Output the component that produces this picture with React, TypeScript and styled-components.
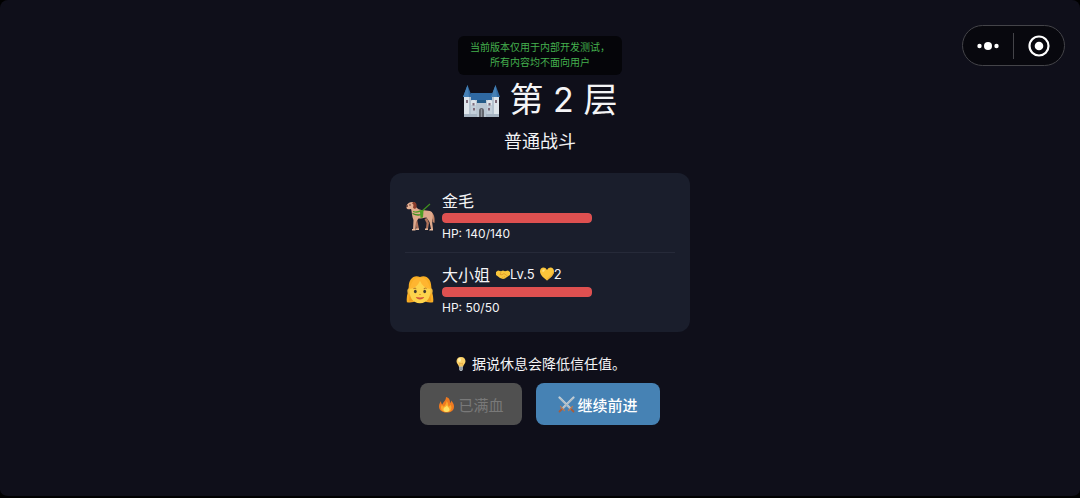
import React from "react";
import styled, { createGlobalStyle } from "styled-components";

const GlobalStyle = createGlobalStyle`
  * { box-sizing: border-box; }
  body {
    margin: 0;
    background: #000;
    color: #f4f4f6;
    font-family: Inter, "Noto Sans CJK SC", sans-serif;
  }
  h1, h2, p { margin: 0; font-weight: 400; }
`;

const Screen = styled.main`
  position: relative;
  min-height: 100vh;
  padding: 36px 16px;
  display: flex;
  flex-direction: column;
  align-items: center;
  background: #0f0f1a;
  border-bottom: 2px solid #000;
  border-radius: 8px;
`;

const Notice = styled.p`
  padding: 4px 12px 5px;
  border-radius: 6px;
  background: #050509;
  color: #44b04e;
  font-size: 10px;
  line-height: 15px;
  text-align: center;
`;

const Title = styled.h1`
  display: flex;
  align-items: center;
  gap: 10px;
  font-size: 34px;
  line-height: 50px;
`;

const Subtitle = styled.h2`
  margin-top: 4px;
  font-size: 18px;
  line-height: 26px;
`;

const Card = styled.section`
  width: 100%;
  max-width: 300px;
  margin-top: 18px;
  padding: 6px 15px;
  border-radius: 12px;
  background: #1a1e2c;
`;

const Member = styled.article`
  display: flex;
  align-items: center;
  gap: 7px;
  padding: 9px 0 8px;
  & + & { border-top: 1px solid #262a39; }
`;

const Stats = styled.div`
  flex: 1;
`;

const NameRow = styled.div`
  display: flex;
  align-items: center;
  gap: 5px;
  height: 24px;
  font-size: 16px;
`;

const Badge = styled.span`
  display: flex;
  align-items: center;
  font-size: 13px;
`;

const Track = styled.div`
  width: 150px;
  height: 10px;
  margin-top: 1px;
  border-radius: 4px;
  background: #3a3d4a;
  overflow: hidden;
`;

const Fill = styled.div`
  height: 100%;
  border-radius: 4px;
  background: #de5050;
`;

const Hp = styled.div`
  font-size: 12px;
  line-height: 21px;
`;

const Hint = styled.p`
  display: flex;
  align-items: center;
  gap: 4px;
  margin-top: 21px;
  font-size: 14px;
  line-height: 22px;
`;

const Actions = styled.div`
  display: flex;
  gap: 14px;
  margin-top: 8px;
`;

const ActionButton = styled.button<{ $primary?: boolean }>`
  display: flex;
  align-items: center;
  gap: 3px;
  height: 42px;
  padding: 0 ${(p) => (p.$primary ? 22 : 18)}px;
  border: 0;
  border-radius: 8px;
  background: ${(p) => (p.$primary ? "#4682b4" : "#505050")};
  color: ${(p) => (p.$primary ? "#fff" : "#797979")};
  font-family: inherit;
  font-size: 15px;
  font-weight: ${(p) => (p.$primary ? 500 : 400)};
`;

const Capsule = styled.div`
  position: absolute;
  top: 25px;
  right: 15px;
  display: flex;
  align-items: center;
  width: 103px;
  height: 41px;
  border: 1px solid #444449;
  border-radius: 21px;
  background: #08080e;
`;

const CapsuleButton = styled.button`
  flex: 1;
  display: flex;
  align-items: center;
  justify-content: center;
  height: 26px;
  padding: 0;
  border: 0;
  background: none;
  & + & { border-left: 1px solid #444449; }
`;

const Icon = styled.svg`
  display: block;
  flex: none;
`;

const Castle = () => (
  <Icon width="37" height="37" viewBox="0 -1 37 37" aria-hidden="true">
    <path d="M8 10h21l2 9H6z" fill="#2f69a3" />
    <path d="M7 17h23v17H7z" fill="#c3cfda" />
    <path d="M7 18h2v-1h3v1h2v-1h9v1h2v-1h3v1h2v4H7z" fill="#dce4eb" />
    <path d="M13 18h11v16H13z" fill="#b9c6d2" />
    <path d="M1 14h7v20H1zM29 14h7v20h-7z" fill="#dfe6ec" />
    <path d="M6 14h2v20H6zM29 14h2v20h-2z" fill="#b5c3d0" />
    <path d="M4.500 2L9 14H0zM32.500 2L37 14h-9z" fill="#326ca5" />
    <path d="M4.500 2L6 14H0zM32.500 2L34 14h-6z" fill="#4680b5" />
    <path d="M14 17h9v3h-9z" fill="#245b88" />
    <path d="M16 34v-6a2.500 3 0 0 1 5 0v6z" fill="#62656d" />
    <path d="M18.500 26v8" stroke="#8f949d" />
    <path d="M3 17h2v3H3zM32 17h2v3h-2zM9.500 20h2v2.500h-2zM25.500 20h2v2.500h-2zM10 25h2v2.500h-2zM25 25h2v2.500h-2z" fill="#806d7c" />
    <path d="M1 31h13v3H1zM23 31h13v3H23z" fill="#a6b4c2" />
  </Icon>
);

const Dog = () => (
  <Icon width="30" height="30" viewBox="0 0 30 30" aria-hidden="true">
    <path d="M26 11c3 2 4 5 3.500 11l-2-1c0-4-1-6-3-8z" fill="#c08468" />
    <path d="M12 18l2 10h-2.500L10 19zM22 17l2 5-1 6h-2l.5-6-2-4z" fill="#b0735b" />
    <path d="M6 7l5-1c3 4 9 3 14 4 3 1 3 4 2.500 7l-.5 3 1 8h-2l-1.500-7-3-4.500c-3 .5-5 1-8 1L11 21l-.5 8H8l.5-10C7 16 7 12 6 7z" fill="#dfa98c" />
    <path d="M1.500 4.500C3 1.500 6 .5 8.500 1c2 .5 3 3 2.500 5.500C10.500 9 8 9.500 6 8 4 8.500 2 8.500 1.500 7z" fill="#e5b092" />
    <path d="M8 1c3 0 4 2 3.500 5-.5 2-2.500 2.500-3.500.5C8.500 5 9 3 7 2.500z" fill="#8a3c2a" />
    <circle cx="5" cy="4" r=".7" fill="#382523" />
    <path d="M1 4.500l1.500-.5.5 1.500-1.500.7z" fill="#4a2929" />
    <path d="M7.500 12.500c4 2 8 1.500 10 .5M16 11l9-8" fill="none" stroke="#3f8e1f" strokeWidth="1.300" />
    <path d="M8 10c3 1 5 0 8-1l2.500.5-.5 7-2.500.5-.5-6c-3 1-4.500 1-7 0z" fill="#4f9f25" />
    <path d="M7 28h3.500v1.500H7zM11 27.500h3V29h-3zM20 27.500h3V29h-3zM25 28h3v1.500h-4z" fill="#e8bb9e" />
  </Icon>
);

const Girl = () => (
  <Icon width="30" height="30" viewBox="-1 0 32 32" aria-hidden="true">
    <path d="M15 2C8-1 3 5 3 12c0 6-3 10-2 17 4 1 8 0 10-2h8c2 2 6 3 10 2 1-7-2-11-2-17C27 5 22-1 15 2z" fill="#f9ae24" />
    <path d="M4 21l-1 7h6zM26 21l1 7h-6z" fill="#ee9b1e" />
    <ellipse cx="4" cy="17" rx="2.500" ry="3" fill="#f1b83c" />
    <ellipse cx="26" cy="17" rx="2.500" ry="3" fill="#f1b83c" />
    <path d="M4 14c3-1 8-4 11-9 3 5 8 8 11 9 1 9-3 16-11 16S3 23 4 14z" fill="#fdd34c" />
    <path d="M15 3C11 2 6 5 4 15c5-1 9-4 11-9 2 5 6 8 11 9C24 5 19 2 15 3z" fill="#ffb530" />
    <ellipse cx="10" cy="17.500" rx="1.500" ry="1.900" fill="#453b31" />
    <ellipse cx="20" cy="17.500" rx="1.500" ry="1.900" fill="#453b31" />
    <path d="M8 14.500q2-1 3 0M19 14.500q2-1 3 0" fill="none" stroke="#a96a24" />
    <path d="M14 20.800h2" stroke="#dba330" strokeWidth="1.300" />
    <path d="M10.500 23.500q4.500 1 9 0c-1 3.500-8 3.500-9 0z" fill="#d25438" />
  </Icon>
);

const Handshake = () => (
  <Icon width="15" height="14" viewBox="-1 0 15 14" aria-hidden="true">
    <path d="M0 5l2-1.500 3 .8 2-.8 2 .8 3-.8L14 5v3l-3 2-2 1.500-2 .5-3-1-2-1.500L0 8z" fill="#f9c63b" />
    <path d="M5 5L4 7.500l2 .3L8 6.500l3.500 2.500M6 11l1.500-1M9.500 10.500L8 9.300" fill="none" stroke="#e0982a" strokeWidth=".8" />
  </Icon>
);

const Heart = () => (
  <Icon width="14" height="14" viewBox="0 0 14 14" aria-hidden="true">
    <path d="M7 13.500C4 11 0 8 0 4.500 0 0 5-1 7 3c2-4 7-3 7 1.500 0 3.500-4 6.500-7 9z" fill="#fac53b" />
    <ellipse cx="3.500" cy="3.500" rx="1.500" ry="1" fill="#ffe181" transform="rotate(-40 3.500 3.500)" />
    <path d="M13.300 3c0 4-3.800 7-7.300 9l1 1.500C10 11 14 8 14 4.500z" fill="#efb136" />
  </Icon>
);

const Bulb = () => (
  <Icon width="14" height="14" viewBox="0 0 14 14" aria-hidden="true">
    <path d="M7 0C4 0 2.500 2 2.500 4.300 2.500 6.500 4.500 7.500 5 10h4c.5-2.500 2.500-3.500 2.500-5.700C11.500 2 10 0 7 0z" fill="#fdd36a" />
    <ellipse cx="5.500" cy="3" rx="1.500" ry="2" fill="#fff0ae" />
    <path d="M6 9.500L5.500 6l1.500 1 1.500-1L8 9.500" fill="none" stroke="#e6a63c" strokeWidth=".7" />
    <path d="M5 9.500h4v2.800L8 14H6l-1-1.700z" fill="#a9b1b7" />
    <path d="M5 11h4M5 12.400h4" stroke="#727b82" strokeWidth=".6" />
  </Icon>
);

const Fire = () => (
  <Icon width="17" height="17" viewBox="0 0 17 17" aria-hidden="true">
    <path d="M8 1c4 1 4 4 4 6 1-.5 1-1.500 1-2.500 2 2 3 4 3 6 0 4-3 6-7.500 6S1 14 1 10.500C1 8 2 6.500 3 5c0 2 .5 3 1.500 3.500C5 6 8 5 8 1z" fill="#ef7a20" />
    <path d="M8.500 5c2 2 1.500 4 2 5.500 1 0 1.500-1 1.500-2 1 1 1.500 2 1.500 3 0 3-2 4.500-5 4.500s-5.500-1.500-5.500-4.500c0-1 .5-2 1-3 .5 1.500 1 2 2 2C7 9 8.500 8 8.500 5z" fill="#fba92c" />
    <path d="M9 9c0 2 2.500 2.500 2.500 4.500 0 1.500-1 2.500-3 2.500s-3-1-3-2.500C5.500 11 8.500 11 9 9z" fill="#fee064" />
  </Icon>
);

const Swords = () => (
  <Icon width="17" height="17" viewBox="0 0 17 17" aria-hidden="true">
    <path d="M1.500 1.500l11 11M15.500 1.500l-11 11" stroke="#c3ced6" strokeWidth="2.200" strokeLinecap="round" />
    <path d="M2 2.500l9.500 9.500M15 2.500L5.500 12" stroke="#94a3ae" strokeWidth=".7" />
    <path d="M4 13l-2.500 2.500M13 13l2.500 2.500" stroke="#a75c3c" strokeWidth="1.800" strokeLinecap="round" />
    <path d="M2.500 10.500l4 4M14.500 10.500l-4 4" stroke="#b67a54" strokeWidth="1.300" strokeLinecap="round" />
  </Icon>
);

type MemberInfo = {
  name: string;
  hp: number;
  maxHp: number;
  avatar: React.ReactNode;
  level?: number;
  trust?: number;
};

const party: MemberInfo[] = [
  { name: "金毛", hp: 140, maxHp: 140, avatar: <Dog /> },
  { name: "大小姐", hp: 50, maxHp: 50, avatar: <Girl />, level: 5, trust: 2 },
];

export default function App() {
  return (
    <>
      <GlobalStyle />
      <Screen>
        <Notice>
          当前版本仅用于内部开发测试，
          <br />
          所有内容均不面向用户
        </Notice>
        <Title>
          <Castle />
          <span>第 2 层</span>
        </Title>
        <Subtitle>普通战斗</Subtitle>
        <Card>
          {party.map((m) => (
            <Member key={m.name}>
              {m.avatar}
              <Stats>
                <NameRow>
                  <span>{m.name}</span>
                  {m.level !== undefined && (
                    <Badge>
                      <Handshake />
                      Lv.{m.level}
                    </Badge>
                  )}
                  {m.trust !== undefined && (
                    <Badge>
                      <Heart />
                      {m.trust}
                    </Badge>
                  )}
                </NameRow>
                <Track
                  role="progressbar"
                  aria-label={m.name}
                  aria-valuenow={m.hp}
                  aria-valuemax={m.maxHp}
                >
                  <Fill style={{ width: `${(m.hp / m.maxHp) * 100}%` }} />
                </Track>
                <Hp>
                  HP: {m.hp}/{m.maxHp}
                </Hp>
              </Stats>
            </Member>
          ))}
        </Card>
        <Hint>
          <Bulb />
          据说休息会降低信任值。
        </Hint>
        <Actions>
          <ActionButton type="button" disabled>
            <Fire />
            已满血
          </ActionButton>
          <ActionButton type="button" $primary>
            <Swords />
            继续前进
          </ActionButton>
        </Actions>
        <Capsule>
          <CapsuleButton type="button" aria-label="更多">
            <Icon width="24" height="10" viewBox="0 0 24 10" fill="#fff">
              <circle cx="3.500" cy="5" r="2.200" />
              <circle cx="12" cy="5" r="4" />
              <circle cx="20.500" cy="5" r="2.200" />
            </Icon>
          </CapsuleButton>
          <CapsuleButton type="button" aria-label="关闭">
            <Icon width="22" height="22" viewBox="0 0 22 22">
              <circle cx="11" cy="11" r="9.500" fill="none" stroke="#fff" strokeWidth="2.200" />
              <circle cx="11" cy="11" r="4.300" fill="#fff" />
            </Icon>
          </CapsuleButton>
        </Capsule>
      </Screen>
    </>
  );
}
